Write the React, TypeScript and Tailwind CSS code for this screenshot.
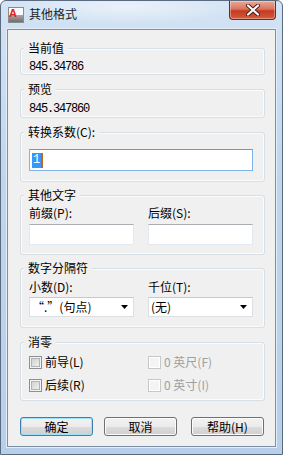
import type { ReactNode } from "react";

function Group({ label, className, children }: { label: string; className: string; children?: ReactNode }) {
  return (
    <div className={`relative rounded-[3px] border border-[#d5dfe5] shadow-[inset_0_0_0_1px_#fbfcfc] ${className}`}>
      <span className="absolute -top-[8px] left-[3px] bg-[#f0f0f0] px-[4px] leading-[14px]">{label}</span>
      {children}
    </div>
  );
}

function TextBox({ focused, children }: { focused?: boolean; children?: ReactNode }) {
  return (
    <div
      className={
        focused
          ? "flex h-[22px] items-center border border-[#7eb4ea] border-t-[#569de5] bg-white pl-[2px]"
          : "h-[21px] border border-[#e3e9ef] border-t-[#abadb3] bg-white"
      }
    >
      {children}
    </div>
  );
}

function Combo({ text }: { text: string }) {
  return (
    <div className="flex h-[20px] items-center justify-between border border-[#dcdfe3] border-t-[#c5c8cc] bg-white pl-[2px] pr-[5px]">
      <span className="leading-[14px]">{text}</span>
      <svg width="7" height="4" viewBox="0 0 7 4">
        <path d="M0 0h7L3.5 4z" fill="#000" />
      </svg>
    </div>
  );
}

function Check({ label, disabled }: { label: string; disabled?: boolean }) {
  return (
    <div className={`flex items-center gap-[3px] ${disabled ? "text-[#a0a0a0]" : "text-black"}`}>
      <span
        className={
          disabled
            ? "h-[13px] w-[13px] border border-[#c8c8c8] bg-[#f4f4f4] shadow-[inset_0_0_0_1px_#fff]"
            : "h-[13px] w-[13px] border border-[#8e8f8f] bg-[linear-gradient(135deg,#cbcbcb,#f6f6f6)] shadow-[inset_0_0_0_1px_#f4f4f4,inset_0_0_0_2px_#aeb3b9]"
        }
      />
      <span className="leading-[14px]">{label}</span>
    </div>
  );
}

function Button({ label, primary, className }: { label: string; primary?: boolean; className?: string }) {
  return (
    <button
      className={`h-[19px] w-[73px] rounded-[3px] border leading-[14px] text-black bg-[linear-gradient(180deg,#f2f2f2_0%,#ebebeb_50%,#dddddd_50%,#cfcfcf_100%)] ${
        primary
          ? "border-[#3c7fb1] shadow-[inset_0_0_0_1px_#9ee1f9]"
          : "border-[#707070] shadow-[inset_0_0_0_1px_#fcfcfc]"
      } ${className ?? ""}`}
    >
      {label}
    </button>
  );
}

export default function App() {
  return (
    <div className="relative flex h-[455px] w-[283px] flex-col overflow-hidden rounded-t-[6px] border border-[#5a6b80] bg-[linear-gradient(180deg,#d3e3f4_0%,#c0d6ee_40%,#b7cfe9_100%)] font-['Noto_Sans_CJK_SC','Noto_Sans',sans-serif] text-[12px] text-black">
      {/* Title bar */}
      <div className="flex h-[28px] shrink-0 items-start bg-[radial-gradient(ellipse_at_45%_20%,rgba(255,255,255,0.55),rgba(255,255,255,0)_55%)]">
        <svg className="ml-[7px] mt-[6px]" width="16" height="16" viewBox="0 0 16 16">
          <defs>
            <linearGradient id="ic" x1="0" y1="0" x2="0" y2="1">
              <stop offset="0" stopColor="#e8e8e8" />
              <stop offset="1" stopColor="#6a6a6a" />
            </linearGradient>
          </defs>
          <rect x="0.5" y="0.5" width="15" height="15" fill="url(#ic)" stroke="#8c8c8c" />
          <rect x="1" y="1" width="14" height="7" fill="#fafafa" />
          <text x="5" y="10" fontSize="11" fontWeight="bold" fill="#e0201b" fontFamily="Liberation Sans, sans-serif" textAnchor="middle">
            A
          </text>
        </svg>
        <span className="ml-[5px] mt-[5px] text-[12px] leading-[16px] text-[#1e1e1e]">其他格式</span>
        <div className="ml-auto mr-[6px] flex h-[19px] w-[47px] items-center justify-center rounded-b-[4px] border border-t-0 border-[#6e2a20] bg-[linear-gradient(180deg,#eaa995_0%,#d8745f_45%,#c53a21_55%,#d45b3c_100%)] shadow-[inset_0_0_0_1px_rgba(255,255,255,0.35)]">
          <svg width="16" height="12" viewBox="0 0 16 12">
            <path d="M3 1.5l10 9M13 1.5l-10 9" stroke="#4a1d16" strokeWidth="4" strokeLinecap="round" />
            <path d="M3 1.5l10 9M13 1.5l-10 9" stroke="#ffffff" strokeWidth="2.2" strokeLinecap="round" />
          </svg>
        </div>
      </div>

      {/* Client area */}
      <div className="mx-[6px] flex h-[418px] shrink-0 flex-col border border-[#7d8fa5] bg-[#f0f0f0] pl-[12px] pr-[10px] pt-[18px] outline outline-1 outline-[#e4eef9]">
        <Group label="当前值" className="h-[27px] pl-[8px] pt-[7px]">
          <span className="font-['Liberation_Mono',monospace] text-[12px] leading-[14px] tracking-[-1.2px]">845.34786</span>
        </Group>

        <Group label="预览" className="mt-[14px] h-[29px] pl-[8px] pt-[8px]">
          <span className="font-['Liberation_Mono',monospace] text-[12px] leading-[14px] tracking-[-1.2px]">845.347860</span>
        </Group>

        <Group label="转换系数(C):" className="mt-[14px] h-[50px] pl-[8px] pr-[11px] pt-[16px]">
          <TextBox focused>
            <span className="flex h-[15px] items-center bg-[#3399ff] px-[1px] font-['Liberation_Mono',monospace] text-[12px] text-white">1</span>
            <span className="h-[15px] w-[2px] bg-[#c8641e]" />
          </TextBox>
        </Group>

        <Group label="其他文字" className="mt-[13px] h-[60px] pl-[8px] pr-[11px] pt-[10px]">
          <div className="grid grid-cols-2 gap-x-[14px]">
            <div>
              <div className="leading-[14px]">前缀(P):</div>
              <div className="mt-[4px]">
                <TextBox />
              </div>
            </div>
            <div>
              <div className="leading-[14px]">后缀(S):</div>
              <div className="mt-[4px]">
                <TextBox />
              </div>
            </div>
          </div>
        </Group>

        <Group label="数字分隔符" className="mt-[13px] h-[60px] pl-[8px] pr-[11px] pt-[11px]">
          <div className="grid grid-cols-2 gap-x-[14px]">
            <div>
              <div className="leading-[14px]">小数(D):</div>
              <div className="mt-[3px]">
                <Combo text="“.”(句点)" />
              </div>
            </div>
            <div>
              <div className="leading-[14px]">千位(T):</div>
              <div className="mt-[3px]">
                <Combo text="(无)" />
              </div>
            </div>
          </div>
        </Group>

        <Group label="消零" className="mt-[14px] h-[59px] pl-[8px] pr-[11px] pt-[12px]">
          <div className="grid grid-cols-2 gap-x-[14px] gap-y-[9px]">
            <Check label="前导(L)" />
            <Check label="0 英尺(F)" disabled />
            <Check label="后续(R)" />
            <Check label="0 英寸(I)" disabled />
          </div>
        </Group>

        <div className="mt-[16px] flex">
          <Button label="确定" primary />
          <Button label="取消" className="ml-[11px]" />
          <Button label="帮助(H)" className="ml-[14px]" />
        </div>
      </div>
    </div>
  );
}
